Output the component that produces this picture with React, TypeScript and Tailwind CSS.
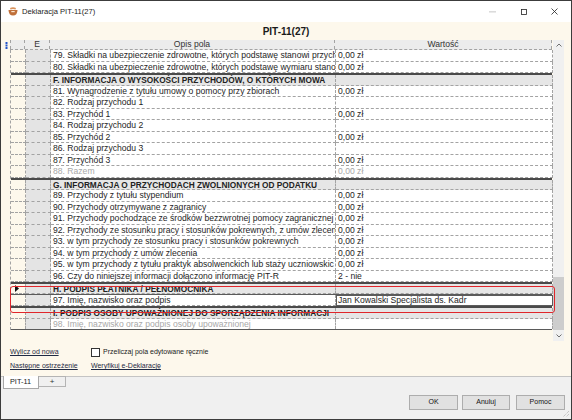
type Row =
    | { kind: "field"; label: string; value?: string; muted?: boolean }
    | { kind: "section"; label: string };

const rows: Row[] = [
    { kind: "field", label: "79. Składki na ubezpieczenie zdrowotne, których podstawę stanowi przych", value: "0,00 zł" },
    { kind: "field", label: "80. Składki na ubezpieczenie zdrowotne, których podstawę wymiaru stano", value: "0,00 zł" },
    { kind: "section", label: "F. INFORMACJA O WYSOKOŚCI PRZYCHODÓW, O KTÓRYCH MOWA" },
    { kind: "field", label: "81. Wynagrodzenie z tytułu umowy o pomocy przy zbiorach", value: "0,00 zł" },
    { kind: "field", label: "82. Rodzaj przychodu 1" },
    { kind: "field", label: "83. Przychód 1", value: "0,00 zł" },
    { kind: "field", label: "84. Rodzaj przychodu 2" },
    { kind: "field", label: "85. Przychód 2", value: "0,00 zł" },
    { kind: "field", label: "86. Rodzaj przychodu 3" },
    { kind: "field", label: "87. Przychód 3", value: "0,00 zł" },
    { kind: "field", label: "88. Razem", value: "0,00 zł", muted: true },
    { kind: "section", label: "G. INFORMACJA O PRZYCHODACH ZWOLNIONYCH OD PODATKU" },
    { kind: "field", label: "89. Przychody z tytułu stypendium", value: "0,00 zł" },
    { kind: "field", label: "90. Przychody otrzymywane z zagranicy", value: "0,00 zł" },
    { kind: "field", label: "91. Przychody pochodzące ze środków bezzwrotnej pomocy zagranicznej", value: "0,00 zł" },
    { kind: "field", label: "92. Przychody ze stosunku pracy i stosunków pokrewnych, z umów zlecen", value: "0,00 zł" },
    { kind: "field", label: "93. w tym przychody ze stosunku pracy i stosunków pokrewnych", value: "0,00 zł" },
    { kind: "field", label: "94. w tym przychody z umów zlecenia", value: "0,00 zł" },
    { kind: "field", label: "95. w tym przychody z tytułu praktyk absolwenckich lub staży uczniowskic", value: "0,00 zł" },
    { kind: "field", label: "96. Czy do niniejszej informacji dołączono informację PIT-R", value: "2 - nie" },
    { kind: "section", label: "H. PODPIS PŁATNIKA / PEŁNOMOCNIKA" },
    { kind: "field", label: "97. Imię, nazwisko oraz podpis", value: "Jan Kowalski Specjalista ds. Kadr" },
    { kind: "section", label: "I. PODPIS OSOBY UPOWAŻNIONEJ DO SPORZĄDZENIA INFORMACJI" },
    { kind: "field", label: "98. Imię, nazwisko oraz podpis osoby upoważnionej", muted: true },
];

const dash = "border-dashed border-[#a3a3a3]";

function GridRow({ row, index }: { row: Row; index: number }) {
    const last = index === rows.length - 1;
    const selected = row.kind === "section" && row.label.startsWith("H.");
    const focused = row.kind === "field" && row.label.startsWith("97.");

    if (row.kind === "section") {
        return (
            <div className={`grid grid-cols-[15px_25px_285px_217px] h-[12.5px] border-t-2 border-[#4a4a4a] ${selected ? "border-b border-b-[#5a5a5a]" : ""}`}>
                <div className={`border-r border-b ${dash} flex items-center pl-[4px]`}>
                    {selected ? (
                        <svg width="4" height="7" viewBox="0 0 4 7"><path d="M0 0 L4 3.5 L0 7 Z" fill="#111" /></svg>
                    ) : ""}
                </div>
                <div className={`bg-[#e4e4e4] border-r border-b ${dash}`} />
                <div className={`bg-[#e6e6e6] border-r border-b ${dash} pl-[2px] overflow-hidden whitespace-nowrap text-[8.3px] leading-[10.5px] font-bold text-[#222]`}>
                    {row.label}
                </div>
                <div className={`bg-[#e6e6e6] border-r border-b ${dash}`} />
            </div>
        );
    }

    return (
        <div className={`grid grid-cols-[15px_25px_285px_217px] h-[11.5px] ${last ? "border-b border-[#5a5a5a]" : ""}`}>
            <div className={`border-r ${last ? "" : "border-b"} ${dash}`} />
            <div className={`bg-[#e4e4e4] border-r ${last ? "" : "border-b"} ${dash}`} />
            <div className={`bg-white border-r ${last ? "" : "border-b"} ${dash} pl-[2px] overflow-hidden whitespace-nowrap text-[8.6px] leading-[10.5px] ${row.muted ? "text-[#a8a8a8]" : "text-[#1e1e1e]"}`}>
                {row.label}
            </div>
            <div className={`bg-white overflow-hidden whitespace-nowrap text-[8.6px] ${row.muted ? "text-[#a8a8a8]" : "text-[#1e1e1e]"} ${focused ? "border border-[#5c5c5c] pl-[1px] leading-[9.5px]" : `border-r ${last ? "" : "border-b"} ${dash} pl-[2px] leading-[10.5px]`}`}>
                {row.value ?? ""}
            </div>
        </div>
    );
}

export default function App() {
    return (
        <div className="relative w-[572px] h-[420px] box-border border border-[#3c3c3c] flex flex-col font-['Liberation_Sans',Arial,sans-serif] bg-[#f0f0f0] overflow-hidden">
            {/* title bar */}
            <div className="h-[21px] bg-white flex items-center shrink-0">
                <svg className="ml-[7px]" width="10" height="9" viewBox="0 0 10 9">
                    <path d="M0.5 3 H9.5 Q9.3 8.5 5 8.5 Q0.7 8.5 0.5 3 Z" fill="#c0703a" />
                    <path d="M2 1 Q5 -0.5 8 1 L7.5 2.4 Q5 1.4 2.5 2.4 Z" fill="#d9935d" />
                    <rect x="3.3" y="4" width="3.4" height="1.2" fill="#fbe4cc" />
                </svg>
                <span className="ml-[4px] text-[7.6px] text-[#1a1a1a]">Deklaracja PIT-11(27)</span>
                <div className="ml-auto flex items-center h-full">
                    <svg className="mr-[25px]" width="7" height="2" viewBox="0 0 7 2"><rect y="0.5" width="7" height="0.8" fill="#b8b8b8" /></svg>
                    <svg className="mr-[24px]" width="6" height="6" viewBox="0 0 6 6"><rect x="0.5" y="0.5" width="5" height="5" fill="none" stroke="#222" strokeWidth="0.8" /></svg>
                    <svg className="mr-[13px]" width="7" height="7" viewBox="0 0 7 7"><path d="M0.5 0.5 L6.5 6.5 M6.5 0.5 L0.5 6.5" stroke="#222" strokeWidth="0.8" /></svg>
                </div>
            </div>

            {/* content */}
            <div className="bg-[#fdf8ec] flex flex-col shrink-0">
                <div className="h-[18px] flex items-center justify-center text-[10px] font-bold text-[#1a1a1a]">PIT-11(27)</div>

                <div className="h-[301px] flex pl-[2px]">
                    <div className="flex flex-col">
                        {/* header */}
                        <div className="flex h-[10px]">
                            <div className="w-[7px] flex items-center justify-center">
                                <svg width="3" height="7" viewBox="0 0 3 7">
                                    <rect x="0.5" y="0" width="2" height="2" fill="#2454c8" />
                                    <rect x="0.5" y="2.5" width="2" height="2" fill="#2454c8" />
                                    <rect x="0.5" y="5" width="2" height="2" fill="#2454c8" />
                                </svg>
                            </div>
                            <div className={`grid grid-cols-[15px_25px_285px_217px] w-[542px] bg-[#ececec] border-b ${dash} text-[8.6px] leading-[9px] text-[#333]`}>
                                <div className={`border-l border-r ${dash}`} />
                                <div className={`border-r ${dash} text-center`}>E</div>
                                <div className={`border-r ${dash} text-center`}>Opis pola</div>
                                <div className={`border-r ${dash} text-center`}>Wartość</div>
                            </div>
                        </div>
                        {/* body */}
                        <div className="flex">
                            <div className="w-[7px]" />
                            <div className={`w-[542px] border-l ${dash}`}>
                                {rows.map((row, i) => (
                                    <GridRow key={`row-${i}`} row={row} index={i} />
                                ))}
                            </div>
                        </div>
                    </div>

                    {/* scrollbar */}
                    <div className="ml-[1px] w-[11px] bg-[#f0f0f0] flex flex-col">
                        <div className="h-[10px] flex items-center justify-center">
                            <svg width="6" height="4" viewBox="0 0 6 4"><path d="M0.5 3.5 L3 1 L5.5 3.5" fill="none" stroke="#606060" strokeWidth="0.9" /></svg>
                        </div>
                        <div className="flex-1 flex flex-col justify-end">
                            <div className="h-[53px] bg-[#cdcdcd]" />
                        </div>
                        <div className="h-[11px] flex items-center justify-center">
                            <svg width="6" height="4" viewBox="0 0 6 4"><path d="M0.5 0.5 L3 3 L5.5 0.5" fill="none" stroke="#606060" strokeWidth="0.9" /></svg>
                        </div>
                    </div>
                </div>

                {/* links */}
                <div className="h-[35px] pl-[9px] pt-[6px] flex flex-col gap-[3px] text-[7px] text-[#1f2a44]">
                    <div className="flex items-center h-[11px]">
                        <span className="w-[81px] underline">Wylicz od nowa</span>
                        <span className="w-[9px] h-[9px] border border-[#333] bg-white box-border" />
                        <span className="ml-[3px] text-[#222]">Przeliczaj pola edytowane ręcznie</span>
                    </div>
                    <div className="flex items-center h-[11px]">
                        <span className="w-[81px] underline">Następne ostrzeżenie</span>
                        <span className="underline">Weryfikuj e-Deklarację</span>
                    </div>
                </div>
            </div>

            {/* bottom */}
            <div className="flex-1 border-t border-[#c4c4c4] flex flex-col">
                <div className="flex pl-[2px] h-[14px] -mt-[1px]">
                    <div className="w-[36px] h-[13px] bg-white border border-t-0 border-[#a8a8a8] text-[7.3px] leading-[12px] pl-[6px] text-[#222]">PIT-11</div>
                    <div className="w-[27px] h-[11px] bg-[#f0f0f0] border border-l-0 border-[#b4b4b4] text-[8px] leading-[9px] text-center text-[#333]">+</div>
                </div>
                <div className="flex justify-end gap-[4px] pr-[6px] pt-[5px]">
                    <button type="button" className="w-[49px] h-[15px] bg-[#e1e1e1] border border-[#adadad] text-[7px] text-[#111]">OK</button>
                    <button type="button" className="w-[48px] h-[15px] bg-[#e1e1e1] border border-[#adadad] text-[7px] text-[#111] mr-[2px]">Anuluj</button>
                    <button type="button" className="w-[49px] h-[15px] bg-[#e1e1e1] border border-[#adadad] text-[7px] text-[#111]">Pomoc</button>
                </div>
            </div>

            {/* resize grip */}
            <svg className="absolute right-[1px] bottom-[1px]" width="9" height="9" viewBox="0 0 9 9">
                <path d="M8 2 L2 8 M8 5 L5 8" stroke="#a0a0a0" strokeWidth="0.8" strokeDasharray="1 1" />
            </svg>

            {/* highlight annotation */}
            <div className="absolute left-[9px] top-[285px] w-[545px] h-[27px] border-[1.5px] border-[#e0262b] rounded-[3px] pointer-events-none" />
        </div>
    );
}
